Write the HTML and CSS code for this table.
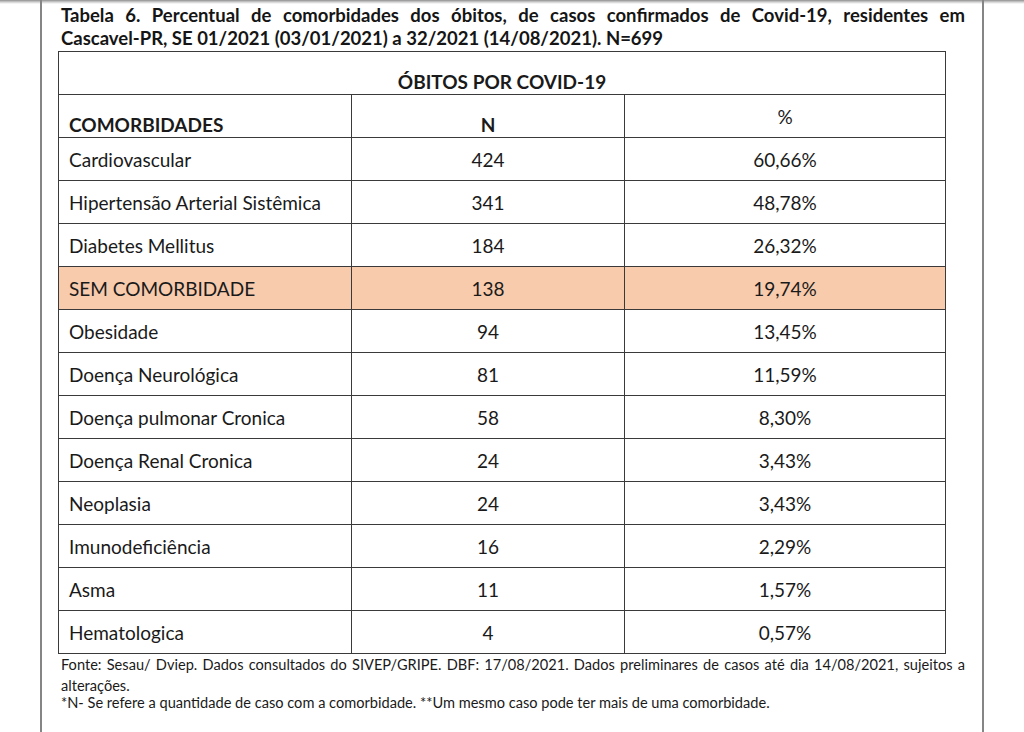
FILE: index.html
```html
<!DOCTYPE html>
<html lang="pt-BR">
<head>
<meta charset="utf-8">
<title>Tabela 6</title>
<link rel="stylesheet" href="styles.css">
</head>
<body>
<div class="page">
  <h1 class="title"><span class="line1">Tabela 6. Percentual de comorbidades dos óbitos, de casos confirmados de Covid-19, residentes em</span> Cascavel-PR, SE 01/2021 (03/01/2021) a 32/2021 (14/08/2021). N=699</h1>
  <table class="data">
    <colgroup>
      <col class="c1"><col class="c2"><col class="c3">
    </colgroup>
    <thead>
      <tr class="h1"><th colspan="3">ÓBITOS POR COVID-19</th></tr>
      <tr class="h2"><th class="left">COMORBIDADES</th><th>N</th><th class="mid">%</th></tr>
    </thead>
    <tbody>
      <tr><td>Cardiovascular</td><td>424</td><td>60,66%</td></tr>
      <tr><td>Hipertensão Arterial Sistêmica</td><td>341</td><td>48,78%</td></tr>
      <tr><td>Diabetes Mellitus</td><td>184</td><td>26,32%</td></tr>
      <tr class="hl"><td>SEM COMORBIDADE</td><td>138</td><td>19,74%</td></tr>
      <tr><td>Obesidade</td><td>94</td><td>13,45%</td></tr>
      <tr><td>Doença Neurológica</td><td>81</td><td>11,59%</td></tr>
      <tr><td>Doença pulmonar Cronica</td><td>58</td><td>8,30%</td></tr>
      <tr><td>Doença Renal Cronica</td><td>24</td><td>3,43%</td></tr>
      <tr><td>Neoplasia</td><td>24</td><td>3,43%</td></tr>
      <tr><td>Imunodeficiência</td><td>16</td><td>2,29%</td></tr>
      <tr><td>Asma</td><td>11</td><td>1,57%</td></tr>
      <tr><td>Hematologica</td><td>4</td><td>0,57%</td></tr>
    </tbody>
  </table>
  <p class="note">Fonte: Sesau/ Dviep. Dados consultados do SIVEP/GRIPE. DBF: 17/08/2021. Dados preliminares de casos até dia 14/08/2021, sujeitos a alterações.</p>
  <p class="note2">*N- Se refere a quantidade de caso com a comorbidade. **Um mesmo caso pode ter mais de uma comorbidade.</p>
</div>
</body>
</html>
```
FILE: styles.css
```css
html, body {
  margin: 0;
  padding: 0;
  height: 100%;
}
body {
  background: linear-gradient(#8f8f8f 0, #cfcfcf 2px, #ffffff 4px) no-repeat;
  font-family: Lato, "Open Sans", sans-serif;
  color: #1a1a1a;
  overflow: hidden;
}
.page {
  margin-left: 40px;
  width: 940px;
  height: 732px;
  border-left: 2px solid #858585;
  border-right: 2px solid #858585;
}
.title {
  margin: 0;
  padding: 4px 17px 0 19px;
  font-size: 18.5px;
  line-height: 23px;
  font-weight: 700;
  text-align: left;
  color: #151515;
}
.line1 {
  display: block;
  text-align: justify;
  text-align-last: justify;
}
.data {
  margin: 1px 0 0 16px;
  width: 887px;
  border-collapse: collapse;
  table-layout: fixed;
  font-size: 19px;
}
.c1 { width: 293px; }
.c2 { width: 273px; }
.c3 { width: 321px; }
.data th, .data td {
  border: 1px solid #3a3a3a;
  height: 43px;
  padding: 0;
  text-align: center;
  box-sizing: border-box;
}
.data th {
  font-weight: 700;
  vertical-align: bottom;
  padding-bottom: 1px;
}
.data th.left {
  text-align: left;
  padding-left: 10px;
}
.data th.mid {
  font-weight: 400;
  vertical-align: middle;
  padding-bottom: 0;
}
.data td {
  vertical-align: middle;
}
.data td:first-child {
  text-align: left;
  padding-left: 10px;
}
.hl td {
  background: #f8cbad;
}
.note {
  margin: 0;
  padding: 0 17px 0 19px;
  font-size: 14.6px;
  line-height: 21px;
  text-align: justify;
}
.note2 {
  margin: -2px 0 0;
  padding: 0 17px 0 19px;
  font-size: 14.6px;
  line-height: 18px;
}
```
